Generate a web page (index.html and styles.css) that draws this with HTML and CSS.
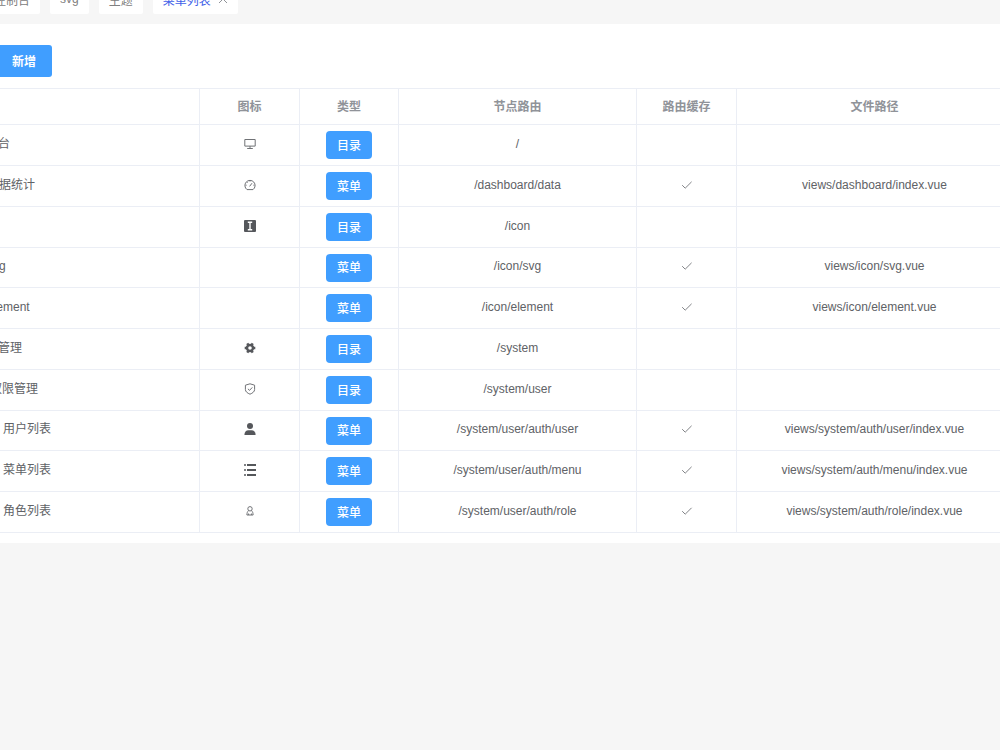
FILE: index.html
```html
<!DOCTYPE html>
<html lang="zh-CN">
<head>
  <meta charset="UTF-8">
  <meta name="viewport" content="width=device-width, initial-scale=1.0">
  <title>菜单列表</title>
  <link rel="stylesheet" href="styles.css">
</head>
<body>
  <div class="page">
    <nav class="tabs">
      <a class="tab" href="#">控制台</a>
      <a class="tab" href="#">svg</a>
      <a class="tab" href="#">主题</a>
      <a class="tab active" href="#">菜单列表
        <svg class="close" viewBox="0 0 10 10"><path d="M1 1l8 8M9 1L1 9"/></svg>
      </a>
    </nav>

    <main class="card">
      <div class="toolbar">
        <button class="btn btn-add" type="button">新增</button>
      </div>

      <table class="menu-table">
        <colgroup>
          <col class="col-name">
          <col class="col-icon">
          <col class="col-type">
          <col class="col-route">
          <col class="col-cache">
          <col>
        </colgroup>
        <thead>
          <tr>
            <th></th>
            <th>图标</th>
            <th>类型</th>
            <th>节点路由</th>
            <th>路由缓存</th>
            <th>文件路径</th>
          </tr>
        </thead>
        <tbody>
          <tr>
            <td class="level-0">控制台</td>
            <td><svg class="icon line" viewBox="0 0 12 12"><path d="M.8 1.5h10.4v6.6H.8zM6 8.1v2.4M3.2 10.5h5.6"/></svg></td>
            <td class="type"><button class="btn btn-type" type="button">目录</button></td>
            <td>/</td>
            <td></td>
            <td></td>
          </tr>
          <tr>
            <td class="level-1">数据统计</td>
            <td><svg class="icon line" viewBox="0 0 12 12"><path d="M3 10.6a5.1 5.1 0 1 1 6 0zM5.6 7.4L8 4.2M6 1.4v1.2M1.6 6.2h1M9.4 6.2h1M3 3l.6.6"/></svg></td>
            <td class="type"><button class="btn btn-type" type="button">菜单</button></td>
            <td>/dashboard/data</td>
            <td><svg class="icon check" viewBox="0 0 12 12"><path d="M1.2 6.2l3 3L10.6 2.8"/></svg></td>
            <td>views/dashboard/index.vue</td>
          </tr>
          <tr>
            <td class="level-0">图标</td>
            <td><svg class="icon solid" viewBox="0 0 12 12"><rect width="12" height="12" rx="1"/><path class="cut" d="M3.8 2.3h4.4M6 2.3v7.4M3.8 9.7h4.4"/></svg></td>
            <td class="type"><button class="btn btn-type" type="button">目录</button></td>
            <td>/icon</td>
            <td></td>
            <td></td>
          </tr>
          <tr>
            <td class="level-1">svg</td>
            <td></td>
            <td class="type"><button class="btn btn-type" type="button">菜单</button></td>
            <td>/icon/svg</td>
            <td><svg class="icon check" viewBox="0 0 12 12"><path d="M1.2 6.2l3 3L10.6 2.8"/></svg></td>
            <td>views/icon/svg.vue</td>
          </tr>
          <tr>
            <td class="level-1">element</td>
            <td></td>
            <td class="type"><button class="btn btn-type" type="button">菜单</button></td>
            <td>/icon/element</td>
            <td><svg class="icon check" viewBox="0 0 12 12"><path d="M1.2 6.2l3 3L10.6 2.8"/></svg></td>
            <td>views/icon/element.vue</td>
          </tr>
          <tr>
            <td class="level-0">系统管理</td>
            <td><svg class="icon gear" viewBox="0 0 12 12"><circle cx="6" cy="6" r="3"/><path d="M.7 6h1.800M9.500 6h1.800M3.300 1.400l1 1.700M7.700 8.900l1 1.700M8.700 1.400l-1 1.700M4.300 8.900l-1 1.700"/></svg></td>
            <td class="type"><button class="btn btn-type" type="button">目录</button></td>
            <td>/system</td>
            <td></td>
            <td></td>
          </tr>
          <tr>
            <td class="level-1-group">权限管理</td>
            <td><svg class="icon line" viewBox="0 0 12 12"><path d="M6 .8l4.6 1.4v4.3c0 2.2-2 3.6-4.6 4.7C3.4 10.1 1.4 8.7 1.4 6.5V2.2zM3.9 5.8l1.6 1.6 2.8-3"/></svg></td>
            <td class="type"><button class="btn btn-type" type="button">目录</button></td>
            <td>/system/user</td>
            <td></td>
            <td></td>
          </tr>
          <tr>
            <td class="level-2">用户列表</td>
            <td><svg class="icon solid" viewBox="0 0 12 12"><circle cx="6" cy="3" r="3"/><path d="M.4 12c0-3 1.6-4.8 4.100-4.800h3c2.500 0 4.100 1.800 4.100 4.800z"/></svg></td>
            <td class="type"><button class="btn btn-type" type="button">菜单</button></td>
            <td>/system/user/auth/user</td>
            <td><svg class="icon check" viewBox="0 0 12 12"><path d="M1.2 6.2l3 3L10.6 2.8"/></svg></td>
            <td>views/system/auth/user/index.vue</td>
          </tr>
          <tr>
            <td class="level-2">菜单列表</td>
            <td><svg class="icon solid" viewBox="0 0 12 12"><path d="M3 0h9v2H3zM3 5h9v2H3zM3 10h9v2H3z"/><circle cx="1" cy="1" r="1"/><circle cx="1" cy="6" r="1"/><circle cx="1" cy="11" r="1"/></svg></td>
            <td class="type"><button class="btn btn-type" type="button">菜单</button></td>
            <td>/system/user/auth/menu</td>
            <td><svg class="icon check" viewBox="0 0 12 12"><path d="M1.2 6.2l3 3L10.6 2.8"/></svg></td>
            <td>views/system/auth/menu/index.vue</td>
          </tr>
          <tr>
            <td class="level-2">角色列表</td>
            <td><svg class="icon line" viewBox="0 0 12 12"><circle cx="6" cy="3.8" r="2.2"/><path d="M4.6 5.6C3.3 6.5 3 8 2.9 10h6.2C9 8 8.7 6.500 7.400 5.600M4.600 8.500V10M7.400 8.500V10"/></svg></td>
            <td class="type"><button class="btn btn-type" type="button">菜单</button></td>
            <td>/system/user/auth/role</td>
            <td><svg class="icon check" viewBox="0 0 12 12"><path d="M1.2 6.2l3 3L10.6 2.8"/></svg></td>
            <td>views/system/auth/role/index.vue</td>
          </tr>
        </tbody>
      </table>
    </main>
  </div>
</body>
</html>
```
FILE: styles.css
```css
body {
  margin: 0;
  overflow: hidden;
  background: #f6f6f6;
  color: #606266;
  font-family: "Liberation Sans", "Noto Sans CJK SC", sans-serif;
  font-size: 12px;
}

/* the page is scrolled a little past its top left corner */
.page { margin: -24px -13px 0 -60px; }

.tabs {
  display: flex;
  gap: 10px;
  padding: 8px 0 10px 44px;
}
.tab {
  display: flex;
  align-items: center;
  gap: 7px;
  height: 30px;
  padding: 0 10px;
  background: #fff;
  border-radius: 2px;
  color: #808080;
  text-decoration: none;
}
.tab.active { color: #4060e8; }
.close {
  width: 10px;
  height: 10px;
  fill: none;
  stroke: #909399;
}

.card {
  background: #fff;
  padding: 21px 0 10px;
}
.toolbar { padding: 0 0 11px 56px; }

.btn {
  display: inline-block;
  background: #409eff;
  color: #fff;
  border: none;
  border-radius: 3px;
  font-family: inherit;
  font-size: 12px;
  cursor: pointer;
  vertical-align: top;
}
.btn:hover { background: #66b1ff; }
.btn-add { height: 32px; padding: 0 16px 2px; font-weight: bold; }
.btn-type { height: 28px; padding: 0 11px 2px; border-radius: 4px; font-weight: 500; }

.menu-table {
  width: 100%;
  table-layout: fixed;
  border-collapse: separate;
  border-spacing: 0;
  border-top: 1px solid #ebeef5;
}
.col-name { width: 260px; }
.col-icon { width: 100px; }
.col-type { width: 99px; }
.col-route { width: 238px; }
.col-cache { width: 100px; }

th, td {
  box-sizing: border-box;
  padding: 0;
  height: 41px;
  line-height: 16px;
  text-align: center;
  border-right: 1px solid #ebeef5;
  border-bottom: 1px solid #ebeef5;
}
th {
  height: 36px;
  color: #909399;
}
td { padding-bottom: 3px; }
td.type { padding-bottom: 0; }
tbody tr:nth-child(4n) td { height: 40px; }
td:first-child { text-align: left; }

td.level-0 { padding-left: 34px; }
td.level-1 { padding-left: 47px; }
td.level-1-group { padding-left: 50px; }
td.level-2 { padding-left: 63px; }

.icon {
  display: block;
  width: 12px;
  height: 12px;
  margin: 0 auto;
}
.line, .check {
  fill: none;
  stroke: #707276;
}
.check { stroke: #808286; }
.solid { fill: #55575b; }
.gear {
  fill: none;
  stroke: #55575b;
  stroke-width: 2.4;
}
.cut {
  fill: none;
  stroke: #fff;
  stroke-width: 1.4;
}
```
